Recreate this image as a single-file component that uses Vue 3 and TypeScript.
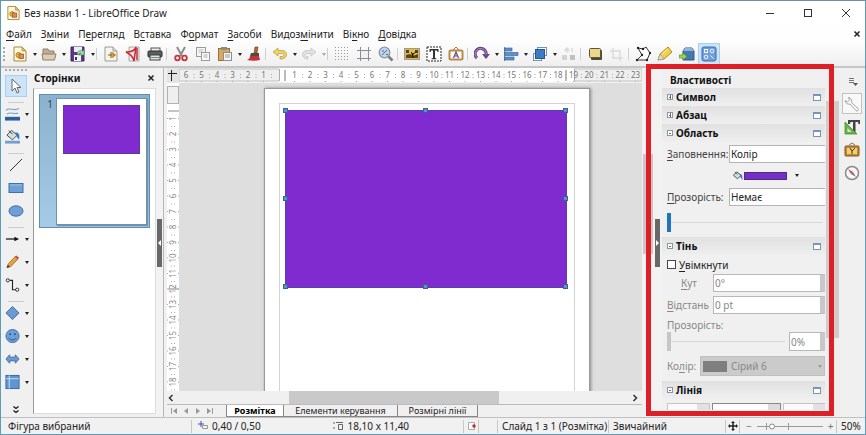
<script setup lang="ts">
import { ref } from 'vue'

interface Tool { icon: string; label: string; menu?: boolean; active?: boolean; off?: boolean }

const icons: Record<string, string> = {
  doc: '<path d="M2 1h8l4 4v10H2z" fill="#fff8dc" stroke="#a58a3c"/><path d="M10 1v4h4z" fill="#e3c45b" stroke="#a58a3c" stroke-width=".7"/><circle cx="6.500" cy="9" r="2.600" fill="#f0b429" stroke="#9a6b12" stroke-width=".7"/><rect x="7" y="8" width="4.500" height="4.500" fill="#d98f5a" stroke="#8c4a20" stroke-width=".7"/>',
  folder: '<path d="M2 13V3h5l1 2h5v3" fill="#bfae93" stroke="#8f8068"/><path d="M1 8h14l-1.500 6H2z" fill="#dccdb4" stroke="#8f8068"/>',
  save: '<path d="M1 1h13v14H1z" fill="#5a3a86" stroke="#3d2762"/><rect x="4" y="1" width="8" height="5" fill="#efeaf6"/><rect x="4" y="9" width="7" height="6" fill="#f4f4f4"/><rect x="5" y="11" width="2" height="3" fill="#44305f"/><path d="M7 8a4 4 0 0 1 6-3l1-1v5H9l2-2a2 2 0 0 0-2 2z" fill="#9fdca6" stroke="#3d8a4c" stroke-width=".6"/>',
  newpage: '<path d="M2 1h8l4 4v10H2z" fill="#f4f4f0" stroke="#9c9c94"/><path d="M10 1v4h4" fill="#ddd" stroke="#9c9c94"/><path d="M5 9h6M9 6.500l3 2.500-3 2.500" stroke="#c48b1c" stroke-width="1.600" fill="none"/><path d="M8 6v6" stroke="#7a5a18"/>',
  pdf: '<path d="M4 1h10v14H4z" fill="#f3efef" stroke="#aaa"/><path d="M1 6c5 0 9-2 10-5L9 15c-1-5-4-7-8-9z" fill="#f7dede" stroke="#c52a33" stroke-width="1.500"/><path d="M12 2v12" stroke="#c52a33" stroke-width="1.500"/>',
  print: '<rect x="4" y="2" width="9" height="4" fill="#eee" stroke="#555"/><rect x="1" y="5" width="14" height="6" rx="1" fill="#5b5f63" stroke="#2c2f31"/><rect x="3" y="9" width="10" height="5" fill="#dfe5e0" stroke="#3c3f41"/><path d="M4 11.500h8" stroke="#7f8784"/>',
  cut: '<path d="M4 1l5 9M12 1L7 10" stroke="#8c8c8c" stroke-width="2"/><circle cx="4.500" cy="12" r="2.300" fill="none" stroke="#c4353c" stroke-width="1.800"/><circle cx="11.500" cy="12" r="2.300" fill="none" stroke="#c4353c" stroke-width="1.800"/>',
  copy: '<rect x="1.500" y="1.500" width="9" height="9" fill="#f5f5f5" stroke="#9a9a9a"/><path d="M3.500 4h5M3.500 6h4" stroke="#bbb"/><rect x="6.500" y="6.500" width="8" height="8" fill="#fafafa" stroke="#9a9a9a"/><path d="M8.500 9h4M8.500 11h4" stroke="#aaa"/>',
  paste: '<rect x="1.500" y="2.500" width="11" height="12" fill="#d8a85e" stroke="#98702f"/><rect x="4" y="1" width="6" height="3" fill="#8b8b8b"/><rect x="6.500" y="6.500" width="8" height="8" fill="#f5f5f5" stroke="#8d8d8d"/><path d="M8 9h5M8 11h5" stroke="#999"/>',
  brush: '<path d="M9 1h3l-1 6H8z" fill="#a86a32" stroke="#6f4118" stroke-width=".6"/><path d="M5 7h8v3H4z" fill="#4a4a4a"/><path d="M4 10h9l1 4c-4 1-9 1-13 0 2-1 3-2 3-4z" fill="#c4333a"/>',
  undo: '<path d="M1 6l5-4v2.500h4c6 0 6 8 0 8.500H8v-2.500h2c2.500 0 2.500-3 0-3H6V10z" fill="#ecd568" stroke="#b39a34" stroke-width=".7"/>',
  redo: '<path d="M15 6l-5-4v2.500H6c-6 0-6 8 0 8.500h1v-2.500H6c-2.500 0-2.500-3 0-3h4V10z" fill="#e2e2e2" stroke="#c2c2c2" stroke-width=".7"/>',
  grid: '<path d="M1 1.500h15M1 4.500h15M1 7.500h15M1 10.500h15M1 13.500h15" stroke="#999" stroke-dasharray="1 2"/>',
  guides: '<path d="M4.500 1v14M12.500 1v14M1 4.500h14M1 12.500h14" stroke="#8a8f96"/><rect x="5" y="5" width="7" height="7" fill="#eef0f2"/>',
  zoom: '<circle cx="6.500" cy="6.500" r="5.300" fill="#bfd4ec" stroke="#8b97a5" stroke-width="1.300"/><path d="M4 9l5-5M4 5h2M8 8.500h2" stroke="#4d6f98"/><path d="M10.500 10.500l4 4" stroke="#7c7c7c" stroke-width="2.500"/>',
  image: '<rect x="0.500" y="2.500" width="15" height="11" fill="#e0b84e" stroke="#9b9b94"/><path d="M2 4h12v3H2z" fill="#4b4433"/><path d="M5 4h6v4H5z" fill="#e9bd45"/><path d="M2 12V9l4-1 3 2 5-2v4z" fill="#5c4718"/><path d="M9 12V8l-2-2M9 8l3-2" stroke="#2e260f"/>',
  textbox: '<rect x="1" y="1" width="14" height="14" fill="#fff" stroke="#222" stroke-dasharray="2 1"/><path d="M3.500 3h9v3h-1l-.5-1.500H9V12l1.500.5v.8h-5v-.8L7 12V4.500H5L4.500 6h-1z" fill="#333"/>',
  fontwork: '<path d="M5 4l3-3 3 3" fill="none" stroke="#a37a3a"/><rect x="1.500" y="4.500" width="13" height="9" rx="1" fill="#fff" stroke="#b98a4a" stroke-width="2"/><path d="M5.500 12L8 6l2.500 6M6.500 10h3" fill="none" stroke="#6d4379" stroke-width="1.200"/>',
  rotate: '<path d="M3 12a5.500 5.500 0 1 1 9-3" fill="none" stroke="#6c4583" stroke-width="3.200"/><path d="M8 8h8l-4 5z" fill="#6c4583"/><path d="M3 12a5.500 5.500 0 1 1 9-3" fill="none" stroke="#a98abd"/>',
  align: '<path d="M1.500 1v14" stroke="#6382a5"/><rect x="2" y="2" width="7" height="3" fill="#5e91c9" stroke="#315f93" stroke-width=".6"/><rect x="2" y="6.500" width="13" height="3" fill="#5e91c9" stroke="#315f93" stroke-width=".6"/><rect x="2" y="11" width="9" height="3" fill="#5e91c9" stroke="#315f93" stroke-width=".6"/>',
  arrange: '<rect x="5.500" y="1.500" width="9" height="8" fill="#fff" stroke="#7b91a8"/><rect x="1.500" y="7.500" width="8" height="7" fill="#fff" stroke="#7b91a8"/><rect x="3.500" y="3.500" width="9" height="9" fill="#3b7cc4" stroke="#245894"/>',
  distribute: '<path d="M6 1l3 3-3 3-3-3z" fill="#ddd"/><rect x="1" y="9" width="5" height="5" fill="#d3d3d3"/><rect x="9" y="9" width="5" height="5" fill="#c0c0c0"/><path d="M11 2v4" stroke="#ccc"/>',
  shadow: '<rect x="4" y="4" width="11" height="10" rx="1" fill="#4c4a3d"/><rect x="2.500" y="2.500" width="11" height="9" rx="1" fill="#ead98c" stroke="#5f5630"/>',
  crop: '<path d="M4 2v10h10M1 5h10v10" fill="none" stroke="#dadada" stroke-width="1.500"/>',
  polygon: '<path d="M3 2l5 1 3-2 4 6-3 7H2l5-5z" fill="#fff" stroke="#333"/><g fill="#222"><circle cx="3" cy="2" r="1.200"/><circle cx="8" cy="3" r="1.200"/><circle cx="15" cy="7" r="1.200"/><circle cx="12" cy="14" r="1.200"/><circle cx="2" cy="14" r="1.200"/><circle cx="7" cy="9" r="1.200"/></g>',
  highlight: '<path d="M1 14l2-6 8-7 4 5-8 7z" fill="#f0cf4a" stroke="#b18a1d"/><path d="M1 14l2-6 4 5z" fill="#ddd" stroke="#999" stroke-width=".7"/><path d="M5 8l6-5" stroke="#fff2a8"/>',
  extrude: '<path d="M4 5l2-3h7l2 3v9H4z" fill="#4579ae" stroke="#2f5a88"/><path d="M4 5l2-3h7l2 3z" fill="#8fb4da"/><path d="M0 9h4V7l4 3.500L4 14v-2H0z" fill="#9bd44a" stroke="#4f8a1c" stroke-width=".6"/>',
  controls: '<rect x="1" y="1" width="14" height="14" rx="2" fill="#6f9fdc" stroke="#3b6cab"/><g fill="none" stroke="#f1f6fc"><rect x="3.500" y="3.500" width="3" height="3"/><circle cx="11" cy="5" r="1.800"/><circle cx="5" cy="11" r="1.800"/><path d="M9.500 9.500l3 3"/></g>',
  cursor: '<path d="M4 1v12l3-3 2 5 2-1-2-4.500h4z" fill="#fff" stroke="#666"/>',
  linecolor: '<path d="M1 4c5-4 8 2 14-2M2 8c5-3 8 1 12-1" fill="none" stroke="#7f9cbd" stroke-width="1.200"/><rect x="0" y="11" width="16" height="4" fill="#28609f"/>',
  fill: '<path d="M2 6l5-5 6 5-5 5z" fill="#d6dde3" stroke="#444"/><path d="M4 1l4 4" stroke="#333"/><path d="M11 3c4 0 5 3 4 8l-3-4z" fill="#3a7abd"/><rect x="0" y="12" width="16" height="3" fill="#6f9fd3"/>',
  bucket: '<path d="M2 7l5-5 6 5-5 5z" fill="#d6dde3" stroke="#444" stroke-width="1.300"/><path d="M4 2l4 4" stroke="#333"/><path d="M11 5c4 0 4.500 3 4 9l-3-5z" fill="#3a7abd"/>',
  line: '<path d="M2 14L14 2" stroke="#333"/>',
  rect: '<rect x="1" y="3.500" width="14" height="9" fill="#6d9fd9" stroke="#3f6ea8"/><path d="M2 5h12" stroke="#9cc0ea"/>',
  ellipse: '<ellipse cx="8" cy="8" rx="7" ry="5.200" fill="#6d9fd9" stroke="#3f6ea8"/>',
  arrow: '<path d="M1 8h11" stroke="#111" stroke-width="1.300"/><path d="M10 5.500l5 2.500-5 2.500z" fill="#111"/>',
  pencil: '<path d="M2 14l1.500-4L11 2l3 2.500L6 13z" fill="#e8a33c" stroke="#96601b" stroke-width=".8"/><path d="M10.500 2.500L12 1l3 2.500-1.500 1.500z" fill="#cc4848"/><path d="M2 14l1-3 2 2z" fill="#333"/>',
  connector: '<path d="M5 3h3v10h4" fill="none" stroke="#222" stroke-width="1.200"/><circle cx="3" cy="3" r="1.700" fill="#fff" stroke="#222"/><circle cx="13" cy="13" r="1.700" fill="#fff" stroke="#222"/>',
  diamond: '<path d="M8 1l7 7-7 7-7-7z" fill="#6b9ad2" stroke="#3f6ea8"/>',
  smiley: '<circle cx="8" cy="8" r="7" fill="#6d9fd9" stroke="#3f6ea8"/><circle cx="5.500" cy="6" r="1" fill="#264d7d"/><circle cx="10.500" cy="6" r="1" fill="#264d7d"/><path d="M4 10c2 3 6 3 8 0" fill="none" stroke="#264d7d"/>',
  dblarrow: '<path d="M1 8l4-4.500V6h6V3.500L15 8l-4 4.500V10H5v2.500z" fill="#6b9ad2" stroke="#3f6ea8"/>',
  flow: '<rect x="1" y="1" width="14" height="14" fill="#5f95d0" stroke="#3467a3"/><path d="M4.500 1v14M1 4.500h14" stroke="#cfe1f5"/>',
  wrench: '<path d="M4.500 1.500a3.600 3.600 0 0 1 3 5l6.500 6a1.500 1.500 0 0 1-2 2.200L6 8a3.600 3.600 0 0 1-4.800-3.500L3.500 6 5.500 4z" fill="#fafafa" stroke="#999" stroke-width=".9"/>',
  styles: '<path d="M4 1h12v4h-1.500l-.5-2h-2.500v10H9V3H6.500L6 5H4z" fill="#444"/><path d="M1 3v12h12z" fill="#69b548" stroke="#3d8127" stroke-width=".7"/><path d="M3.500 9v4h4z" fill="#d9efcf"/>',
  gallery: '<path d="M5 3l3-2 3 2" fill="none" stroke="#777"/><rect x="1" y="4" width="14" height="10" rx="1" fill="#c38b35" stroke="#80551a"/><path d="M3 6h10v6H3z" fill="#f1cf6c"/><path d="M8 12V8M6 6l2 3 3-3" stroke="#4b3411" fill="none"/>',
  compass: '<circle cx="8" cy="8" r="6.500" fill="#f8f8f8" stroke="#8a8a8a" stroke-width="1.500"/><path d="M4 4l5 3-2 2z" fill="#d34848"/><path d="M12 12L9 7 7 9z" fill="#777"/>',
  deckmenu: '<path d="M5 5.500h5M5 7.500h5M5 9.500h5" stroke="#777"/><path d="M9 10h5l-2.500 3z" fill="#555"/>',
  more: '<path d="M5.500 2.500l2.500 2 2.500-2M5.500 6.500l2.500 2 2.500-2" fill="none" stroke="#111" stroke-width="1.300"/>',
}

const groups: Tool[][] = [
  [
    { icon: 'doc', label: 'Створити', menu: true },
    { icon: 'folder', label: 'Відкрити', menu: true },
    { icon: 'save', label: 'Зберегти', menu: true },
  ],
  [{ icon: 'newpage', label: 'Експорт' }, { icon: 'pdf', label: 'PDF' }, { icon: 'print', label: 'Друк' }],
  [
    { icon: 'cut', label: 'Вирізати' },
    { icon: 'copy', label: 'Копіювати' },
    { icon: 'paste', label: 'Вставити', menu: true },
    { icon: 'brush', label: 'Клонувати' },
  ],
  [{ icon: 'undo', label: 'Скасувати', menu: true }, { icon: 'redo', label: 'Повернути', menu: true, off: true }],
  [{ icon: 'grid', label: 'Сітка' }, { icon: 'guides', label: 'Напрямні' }, { icon: 'zoom', label: 'Масштаб' }],
  [{ icon: 'image', label: 'Зображення' }, { icon: 'textbox', label: 'Текст' }, { icon: 'fontwork', label: 'Fontwork' }],
  [
    { icon: 'rotate', label: 'Обернути', menu: true },
    { icon: 'align', label: 'Вирівняти', menu: true },
    { icon: 'arrange', label: 'Розташувати', menu: true },
    { icon: 'distribute', label: 'Розподілити', off: true },
  ],
  [{ icon: 'shadow', label: 'Тінь' }, { icon: 'crop', label: 'Обрізати', off: true }],
  [
    { icon: 'polygon', label: 'Точки' },
    { icon: 'highlight', label: 'Точки склеювання' },
    { icon: 'extrude', label: 'Витискання' },
    { icon: 'controls', label: 'Функції малювання', active: true },
  ],
]

const drawGroups: Tool[][] = [
  [{ icon: 'cursor', label: 'Вибрати', active: true }],
  [{ icon: 'linecolor', label: 'Колір лінії', menu: true }, { icon: 'fill', label: 'Колір заповнення', menu: true }],
  [{ icon: 'line', label: 'Лінія' }, { icon: 'rect', label: 'Прямокутник' }, { icon: 'ellipse', label: 'Еліпс' }],
  [
    { icon: 'arrow', label: 'Стрілки', menu: true },
    { icon: 'pencil', label: 'Криві', menu: true },
    { icon: 'connector', label: "З'єднувачі", menu: true },
  ],
  [
    { icon: 'diamond', label: 'Основні фігури', menu: true },
    { icon: 'smiley', label: 'Символи', menu: true },
    { icon: 'dblarrow', label: 'Блокові стрілки', menu: true },
    { icon: 'flow', label: 'Блок-схема', menu: true },
  ],
]

// [before, access key, after]
const menus: [string, string, string][] = [
  ['', 'Ф', 'айл'], ['З', 'м', 'іни'], ['П', 'е', 'регляд'], ['В', 'с', 'тавка'], ['Ф', 'о', 'рмат'],
  ['', 'З', 'асоби'], ['Видоз', 'м', 'інити'], ['Ві', 'к', 'но'], ['', 'Д', 'овідка'],
]

const deck: Tool[] = [
  { icon: 'deckmenu', label: 'Параметри бічної панелі' },
  { icon: 'wrench', label: 'Властивості', active: true },
  { icon: 'styles', label: 'Стилі' },
  { icon: 'gallery', label: 'Галерея' },
  { icon: 'compass', label: 'Навігатор' },
]

const cm = 15.5
const hTicks = Array.from({ length: 30 }, (_, i) => i - 6).filter(n => n !== 0 && n < 24)
  .map(n => ({ n: Math.abs(n), pos: 100 + n * cm }))
const vTicks = Array.from({ length: 18 }, (_, i) => ({ n: i + 1, pos: 20 + (i + 1) * cm }))

const handles = ['nw', 'n', 'ne', 'w', 'e', 'sw', 's', 'se']
const fillType = ref('Колір')
const transparency = ref('Немає')
const shadowOn = ref(false)
</script>

<template>
  <div class="window">
    <header class="titlebar">
      <svg class="logo" viewBox="0 0 16 16" v-html="icons.doc"></svg>
      <h1>Без назви 1 - LibreOffice Draw</h1>
      <div class="win-buttons">
        <button aria-label="Згорнути"><svg viewBox="0 0 10 10"><path d="M1 5.500h8" /></svg></button>
        <button aria-label="Розгорнути"><svg viewBox="0 0 10 10"><rect x="1.500" y="1.500" width="7" height="7" /></svg></button>
        <button aria-label="Закрити"><svg viewBox="0 0 10 10"><path d="M1 1l8 8M9 1l-8 8" /></svg></button>
      </div>
    </header>

    <nav class="menubar">
      <a v-for="m in menus" :key="m.join('')" href="#">{{ m[0] }}<u>{{ m[1] }}</u>{{ m[2] }}</a>
      <button class="doc-close" aria-label="Закрити документ"><svg viewBox="0 0 8 8"><path d="M1.500 1.500l5 5M6.500 1.500l-5 5" /></svg></button>
    </nav>

    <div class="toolbar">
      <template v-for="(g, gi) in groups" :key="gi">
        <i v-if="gi" class="sep"></i>
        <template v-for="t in g" :key="t.icon">
          <button class="tool" :class="{ active: t.active }" :aria-label="t.label" :disabled="t.off">
            <svg viewBox="0 0 16 16" v-html="icons[t.icon]"></svg>
          </button>
          <button v-if="t.menu" class="drop" :class="{ off: t.off }" :aria-label="t.label + ' – меню'"></button>
        </template>
      </template>
    </div>

    <main class="body">
      <aside class="drawbar">
        <i class="grip"></i>
        <template v-for="(g, gi) in drawGroups" :key="gi">
          <i v-if="gi" class="hsep"></i>
          <div v-for="t in g" :key="t.icon" class="draw-row">
            <button class="tool" :class="{ active: t.active, wide: !t.menu }" :aria-label="t.label">
              <svg viewBox="0 0 16 16" v-html="icons[t.icon]"></svg>
            </button>
            <button v-if="t.menu" class="drop" :aria-label="t.label + ' – меню'"></button>
          </div>
        </template>
        <button class="more" aria-label="Ще"><svg viewBox="0 0 16 11" v-html="icons.more"></svg></button>
      </aside>

      <section class="pages">
        <div class="pages-head">
          <h2>Сторінки</h2>
          <button aria-label="Закрити панель"><svg viewBox="0 0 8 8"><path d="M1.500 1.500l5 5M6.500 1.500l-5 5" /></svg></button>
        </div>
        <div class="pages-list">
          <div class="thumb">
            <span>1</span>
            <div class="thumb-page"><div class="thumb-shape"></div></div>
          </div>
        </div>
      </section>

      <div class="splitter left"><i></i></div>

      <section class="editor">
        <div class="view">
          <div class="corner"><svg viewBox="0 0 12 15"><path d="M1 5.500h9M4.500 2v11" /></svg></div>
          <svg class="hruler" height="15">
            <rect x="0" y="1" width="100%" height="12" fill="#efefef" stroke="#c3c3c3" />
            <rect x="100" y="0" width="295" height="14" fill="#fff" />
            <path d="M100.500 1v12M395.500 1v12" stroke="#aaa" />
            <rect x="105" y="2" width="2" height="11" fill="#bbb" />
            <rect x="386" y="2" width="2" height="11" fill="#bbb" />
            <g v-for="t in hTicks" :key="t.pos">
              <text :x="t.pos" y="10" text-anchor="middle">{{ t.n }}</text>
              <path :d="`M${t.pos + 8} 6v1M${t.pos + 8} 9v1M${t.pos} 13v1`" stroke="#aaa" />
            </g>
          </svg>
          <svg class="vruler" width="12">
            <rect x="0" y="0" width="12" height="100%" fill="#fff" />
            <rect x="0.500" y="3.500" width="11" height="17" fill="#efefef" stroke="#b3b3b3" />
            <rect x="1" y="27" width="11" height="2" fill="#c4c4c4" />
            <rect x="1" y="205" width="11" height="2" fill="#c4c4c4" />
            <g v-for="t in vTicks" :key="t.n">
              <text :transform="`translate(9 ${t.pos}) rotate(-90)`" text-anchor="middle">{{ t.n }}</text>
              <path :d="`M4 ${t.pos + 8}h1M7 ${t.pos + 8}h1M0 ${t.pos}h1M11 ${t.pos}h1`" stroke="#aaa" />
            </g>
          </svg>
          <div class="canvas">
            <div class="sheet">
              <div class="margins"></div>
              <div class="shape">
                <i v-for="h in handles" :key="h" class="handle" :class="h"></i>
              </div>
            </div>
          </div>
        </div>
        <div class="hscroll">
          <svg viewBox="0 0 8 8"><path d="M5.500 1l-3 3 3 3" /></svg>
          <div class="track"><i></i></div>
          <svg viewBox="0 0 8 8"><path d="M2.500 1l3 3-3 3" /></svg>
        </div>
        <div class="layers">
          <div class="nav">
            <button aria-label="Перший"><svg viewBox="0 0 8 8"><path d="M1 1h1v6H1zM7 1v6L3 4z" /></svg></button>
            <button aria-label="Попередній"><svg viewBox="0 0 8 8"><path d="M6 1v6L2 4z" /></svg></button>
            <button aria-label="Наступний"><svg viewBox="0 0 8 8"><path d="M2 1v6l4-3z" /></svg></button>
            <button aria-label="Останній"><svg viewBox="0 0 8 8"><path d="M1 1v6l4-3zM6 1h1v6H6z" /></svg></button>
          </div>
          <button class="tab current">Розмітка</button>
          <button class="tab wide">Елементи керування</button>
          <button class="tab">Розмірні лінії</button>
        </div>
      </section>

      <div class="vscroll"><i></i></div>
      <div class="splitter right"><i></i></div>

      <aside class="props">
        <h2>Властивості</h2>
        <h3><b class="box plus"></b>Символ<i class="launch"></i></h3>
        <h3><b class="box plus"></b>Абзац<i class="launch"></i></h3>
        <h3><b class="box"></b>Область<i class="launch"></i></h3>
        <div class="area">
          <div class="field">
            <label for="filltype"><u>З</u>аповнення:</label>
            <select id="filltype" v-model="fillType"><option>Колір</option></select>
          </div>
          <div class="field color-field">
            <span></span>
            <button class="color-button" aria-label="Колір заповнення">
              <svg viewBox="0 0 16 16" v-html="icons.bucket"></svg><i class="swatch"></i><i class="caret"></i>
            </button>
          </div>
          <div class="field">
            <label for="transp"><u>П</u>розорість:</label>
            <select id="transp" v-model="transparency"><option>Немає</option></select>
          </div>
          <input class="slider" type="range" min="0" max="100" value="0" aria-label="Прозорість">
        </div>
        <h3><b class="box"></b>Тінь<i class="launch"></i></h3>
        <div class="shadow">
          <label class="check"><input v-model="shadowOn" type="checkbox"><span><u>У</u>вімкнути</span></label>
          <div class="field small">
            <label for="angle" class="indent"><u>К</u>ут</label>
            <input id="angle" type="text" value="0°" disabled>
          </div>
          <div class="field small">
            <label for="dist"><u>В</u>ідстань</label>
            <input id="dist" type="text" value="0 pt" disabled>
          </div>
          <label for="shtransp" class="alone">Прозорість:</label>
          <div class="percent">
            <input class="slider" type="range" min="0" max="100" value="0" disabled aria-label="Прозорість тіні">
            <input id="shtransp" type="text" value="0%" disabled>
          </div>
          <div class="field tint">
            <label for="shcolor">Ко<u>л</u>ір:</label>
            <button id="shcolor" disabled><i></i>Сірий 6<b class="caret"></b></button>
          </div>
        </div>
        <h3><b class="box"></b>Лінія<i class="launch"></i></h3>
        <div class="line-row">
          <select aria-label="Стиль початку" disabled></select>
          <select aria-label="Стиль лінії"></select>
          <select aria-label="Стиль кінця" disabled></select>
        </div>
      </aside>

      <div class="props-scroll"><i></i></div>
      <nav class="deck">
        <button v-for="d in deck" :key="d.icon" :class="{ active: d.active }" :aria-label="d.label">
          <svg viewBox="0 0 16 16" v-html="icons[d.icon]"></svg>
        </button>
      </nav>
      <div class="callout"></div>
    </main>

    <footer class="status">
      <span class="state">Фігура вибраний</span>
      <span class="cell pos">
        <svg viewBox="0 0 10 10"><path d="M3 0v6M0 3h6" stroke="#3a4fb0" /><path d="M4.500 4.500h5v3h-5z" fill="none" stroke="#999" /></svg>
        0,40 / 0,50
      </span>
      <span class="size">
        <svg viewBox="0 0 10 10"><path d="M1 1v2M1 6v2M3 1.500h7M5.500 3.500h4v5h-4z" fill="none" stroke="#666" /></svg>
        18,10 x 11,40
      </span>
      <span class="cell modified"><svg viewBox="0 0 10 10"><path d="M1.500 1.500h6v7h-6z" fill="#fff" stroke="#aaa" /><circle cx="7" cy="5" r="1.700" fill="#d02030" /></svg></span>
      <span class="cell sign"></span>
      <span class="cell slide">Слайд 1 з 1 (Розмітка)</span>
      <span class="cell style">Звичайний</span>
      <span class="cell fit"><svg viewBox="0 0 10 10"><path d="M5 1v8M1 5h8" stroke="#222" stroke-width="1.500" /><path d="M5 0l2 2H3zM5 10l2-2H3zM0 5l2-2v4zM10 5L8 3v4z" fill="#222" /></svg></span>
      <span class="cell zoomer">
        <button aria-label="Зменшити">−</button>
        <svg class="zoomline" viewBox="0 0 68 10"><path d="M1 5.500h66M10.500 2v7M32.500 2v7" stroke="#999" /><circle cx="16" cy="5.500" r="2.500" fill="#fff" stroke="#888" /></svg>
        <button aria-label="Збільшити">+</button>
      </span>
      <span class="cell pct">50%</span>
    </footer>
  </div>
</template>

<style>
body { margin: 0; }
</style>

<style scoped>
* { box-sizing: border-box; }
.window {
  display: flex; flex-direction: column; height: 100vh; min-height: 435px; overflow: hidden;
  border: 1px solid #5f9cba; border-top-color: #6d8f9f;
  background: #f0f0f0; color: #222; font: 10px/16px "Noto Sans", "Open Sans", sans-serif;
}
button { padding: 0; border: 0; background: none; font: inherit; color: inherit; display: flex; align-items: center; justify-content: center; }
h1, h2, h3 { margin: 0; font-size: 10px; line-height: 16px; }
h1 { font-weight: 400; }
svg { display: block; flex: none; }
select, input { font: inherit; margin: 0; border-radius: 0; color: #222; }
u { text-underline-offset: 2px; }

.titlebar { display: flex; align-items: center; height: 24px; padding-left: 5px; gap: 3px; background: #fff; flex: none; }
.logo { width: 15px; height: 16px; }
.win-buttons { display: flex; margin-left: auto; }
.win-buttons button { width: 38px; height: 24px; }
.win-buttons svg { width: 10px; height: 10px; fill: none; stroke: #333; }

.menubar { display: flex; align-items: center; height: 17px; padding: 0 3px 0 5px; gap: 9px; background: #fefefe; flex: none; }
.menubar a { color: #222; text-decoration: none; }
.doc-close { margin-left: auto; width: 10px; height: 14px; }
.doc-close svg, .pages-head svg { width: 8px; height: 8px; fill: none; stroke: #222; stroke-width: 1.5; }

.toolbar { display: flex; align-items: center; height: 24px; padding-left: 8px; flex: none; background: linear-gradient(#fdfdfd, #efefef); position: relative; }
.toolbar::before { content: ""; position: absolute; left: 2px; top: 5px; height: 14px; border-left: 2px dotted #aaa; }
.tool { width: 22px; height: 22px; flex: none; }
.tool svg { width: 16px; height: 16px; }
.tool.active { background: #cce4f7; border: 1px solid #a9d0ee; }
.drop { width: 7px; height: 22px; flex: none; }
.drop::before, .caret { content: ""; border: 2px solid transparent; border-top: 3px solid #222; border-bottom: 0; }
.drop.off::before { border-top-color: #aaa; }
.sep { width: 4px; height: 12px; border-left: 1px solid #d0d0d0; flex: none; }

.body { display: flex; flex: 1; min-height: 0; border-top: 2px solid #c6c6c6; position: relative; }
.drawbar { display: flex; flex-direction: column; width: 32px; flex: none; padding: 1px 0 0 4px; background: #f0f0f0; }
.grip { height: 2px; width: 22px; border-top: 2px dotted #aaa; margin-bottom: 4px; }
.draw-row { display: flex; height: 23px; }
.hsep { width: 16px; height: 5px; margin-left: 3px; border-bottom: 1px solid #ccc; }
.draw-row .drop { height: 22px; }
.draw-row .tool:not(.wide) { width: 14px; margin-right: 4px; }
.draw-row .tool:not(.wide) svg { width: 15px; }
.more { margin: auto 0 2px; width: 22px; height: 11px; }
.more svg { width: 16px; height: 11px; }

.pages { display: flex; flex-direction: column; width: 123px; flex: none; }
.pages-head { display: flex; align-items: center; justify-content: space-between; height: 20px; padding: 0 1px; color: #111; }
.pages-list { flex: 1; margin-bottom: 3px; padding: 5px; background: #fff; border: 1px solid #ddd; border-left-color: #999; }
.thumb { display: flex; align-items: flex-start; height: 134px; padding: 3px 2px; border: 1px solid #5d8fb4; background: linear-gradient(#8cb1cd, #a5cbe6); }
.thumb span { width: 14px; padding-right: 3px; text-align: right; line-height: 12px; color: #33424f; }
.thumb-page { flex: 1; height: 127px; padding: 6px; background: #fff; border: 1px solid #6f93ac; box-shadow: 1px 1px 1px #6f93ac; }
.thumb-shape { height: 49px; background: #7f2bcf; border: 1px solid #5b3aa8; }

.splitter { width: 8px; flex: none; display: flex; align-items: center; justify-content: center; border-right: 1px solid #b8b8b8; background: #f2f2f2; }
.splitter i { width: 5px; height: 48px; background: #686868; display: flex; align-items: center; justify-content: center; }
.splitter i::before { content: ""; border: 3px solid transparent; }
.splitter.left i::before { border-right-color: #fff; border-left: 0; }
.splitter.right i::before { border-left-color: #fff; border-right: 0; }

.editor { display: flex; flex-direction: column; flex: 1; min-width: 0; padding-left: 3px; }
.view { flex: 1; min-height: 0; display: grid; grid-template: 15px 1fr / 12px 1fr; }
.corner { background: #e4e4e4; }
.corner svg { width: 12px; height: 15px; stroke: #222; fill: none; }
.hruler { width: 100%; background: #f2f2f2; }
.vruler { height: 100%; background: #ddd; }
.hruler text { font-size: 8px; fill: #777; }
.vruler text { font-size: 8px; fill: #888; }
.canvas { background: #dedede; position: relative; overflow: hidden; }
.sheet { position: absolute; left: 85px; top: 5px; width: 326px; height: 460px; background: #fff; border: 1px solid #999; box-shadow: 1px 0 3px #888; }
.margins { position: absolute; inset: 14px; border: 1px solid #d4d4d4; }
.shape { position: absolute; left: 20px; top: 21px; width: 282px; height: 178px; background: #7f2bcf; border: 1px solid #4f43b0; }
.handle { position: absolute; width: 5px; height: 5px; margin: -3px; background: #5f8fc8; border: 1px solid #3c5f94; }
.nw, .n, .ne { top: 0; } .w, .e { top: 50%; } .sw, .s, .se { top: 100%; }
.nw, .w, .sw { left: 0; } .n, .s { left: 50%; } .ne, .e, .se { left: 100%; }

.hscroll { display: flex; align-items: center; height: 13px; background: #f0f0f0; padding-right: 3px; }
.hscroll svg { width: 8px; height: 8px; fill: none; stroke: #333; stroke-width: 1.5; }
.track { flex: 1; display: flex; height: 13px; }
.track i { width: 46%; margin-left: 25%; background: #c9c9c9; }
.layers { display: flex; height: 13px; border-top: 1px solid #bbb; }
.nav { display: flex; width: 59px; gap: 4px; padding-left: 3px; }
.nav svg { width: 8px; height: 8px; fill: #999; }
.tab { width: 80px; height: 12px; border: solid #888; border-width: 0 1px 1px 0; font-size: 9px; line-height: 11px; white-space: nowrap; }
.tab.wide { width: 114px; }
.tab.current { width: 58px; background: #fff; border-left-width: 1px; font-weight: 700; color: #000; }

.vscroll { width: 11px; padding: 86px 0 0 1px; flex: none; background: #f4f0f0; border-bottom: 14px solid #f0f0f0; }
.vscroll i { display: block; height: 100px; background: #cdc6c6; }
.splitter.right { width: 9px; border-right: 0; }

.props { width: 163px; flex: none; overflow: hidden; height: 342px; display: flex; flex-direction: column; }
.props > * { flex: none; }
.props h2 { padding: 4px 0 0 8px; height: 20px; line-height: 16px; color: #111; }
.props h3 { display: flex; align-items: center; height: 18px; padding: 0 4px 0 5px; gap: 3px; background: linear-gradient(#e1e1e1, #efefef); color: #111; }
.box { width: 6px; height: 6px; border: 1px solid #8a96a6; background: linear-gradient(#667, #667) center / 2px 1px no-repeat #fff; }
.box.plus { background: linear-gradient(#667, #667) center / 2px 1px no-repeat, linear-gradient(#667, #667) center / 1px 4px no-repeat, #fff; }
.launch { width: 8px; height: 7px; margin-left: auto; border: 1px solid #7595bd; border-top-width: 2px; background: #fff; }
.area { padding: 3px 0 5px 5px; }
.field { display: flex; align-items: center; height: 18px; color: #444; }
.field label, .field > span:first-child { width: 62px; flex: none; white-space: nowrap; }
.field select { width: 120px; flex: none; height: 18px; appearance: none; background: #fff; border: 1px solid #b4b4b4; padding: 0 1px; }
.color-field { height: 25px; padding-left: 3px; }
.color-button { gap: 1px; }
.color-button svg { width: 11px; height: 12px; }
.swatch { width: 43px; height: 8px; background: #7a2cc8; border: 1px solid #46327a; }
.caret { margin-left: 7px; }
.slider { appearance: none; display: block; width: 156px; height: 19px; margin-top: 7px; background: linear-gradient(#d8d8d8, #d8d8d8) center / 100% 1px no-repeat; }
.slider::-webkit-slider-thumb { appearance: none; width: 4px; height: 19px; background: #1e74bd; }
.slider:disabled::-webkit-slider-thumb { background: #c6c6c6; }
.shadow { padding: 0 0 5px 5px; color: #888; }
.check { display: flex; align-items: center; gap: 3px; height: 19px; color: #222; }
.check input { appearance: none; width: 9px; height: 9px; border: 1px solid #444; background: #fff; }
.field.small { height: 18px; margin-bottom: 4px; color: #888; }
.field.small label { width: 46px; }
.field.small .indent { padding-left: 14px; }
.field.small input, .percent input[type="text"] { width: 112px; height: 18px; border: 1px solid #b8b8b8; border-right: 5px solid #c8c8c8; background: #fff; padding: 0 1px; color: #888; flex: none; }
.alone { display: block; height: 14px; line-height: 14px; }
.percent { display: flex; gap: 4px; height: 19px; }
.percent .slider { width: 118px; margin: 0; }
.percent input[type="text"] { width: 36px; height: 19px; }
.field.tint { height: 20px; margin-top: 5px; color: #888; }
.tint label { width: 33px; }
.tint button { width: 125px; height: 20px; justify-content: flex-start; gap: 4px; padding: 0 2px; background: #cbcbcb; border: 1px solid #c0c0c0; color: #888; }
.tint button i { width: 24px; height: 11px; background: #7f7f7f; }
.tint .caret { margin-left: auto; border-top-color: #999; }
.line-row { display: flex; gap: 2px; padding: 4px 0 0 5px; }
.line-row select { height: 18px; width: 43px; flex: none; appearance: none; border: 1px solid #b4b4b4; background: linear-gradient(#dcdcdc, #dcdcdc) right / 12px 100% no-repeat #fff; }
.line-row select:nth-child(2) { width: 69px; border-color: #888; }

.props-scroll { width: 14px; flex: none; padding: 33px 0 0 1px; background: #f2eeee; }
.props-scroll i { display: block; height: 237px; background: #d0cccc; }
.deck { display: flex; flex-direction: column; width: 26px; flex: none; align-items: center; gap: 2px; padding: 2px 0; }
.deck button { width: 20px; height: 21px; }
.deck button.active { border: 1px solid #c2c2c2; background: #f8f8f8; }
.deck svg { width: 16px; height: 16px; }
.callout { position: absolute; top: -4px; right: 31px; bottom: 1px; width: 188px; border: 5px solid #dd2027; pointer-events: none; }

.status { display: flex; align-items: center; height: 17px; flex: none; padding-left: 7px; border-top: 1px solid #c0c0c0; background: #f1f1f1; white-space: nowrap; }
.status span { display: flex; align-items: center; gap: 4px; }
.status svg { width: 10px; height: 10px; }
.status .cell { border-left: 1px solid #c8c8c8; height: 13px; }
.state { flex: 188 0 0; }
.status .pos { flex: 139 0 0; padding-left: 6px; }
.size { flex: 133 0 0; }
.modified { width: 15px; padding-left: 3px; }
.sign { width: 19px; }
.slide { width: 111px; padding-left: 4px; }
.style { width: 117px; padding-left: 4px; }
.fit { width: 14px; padding-left: 2px; }
.zoomer { width: 97px; padding-left: 6px; color: #777; }
.status .zoomline { width: 68px; height: 10px; }
.pct { width: 29px; padding-left: 4px; }
</style>
